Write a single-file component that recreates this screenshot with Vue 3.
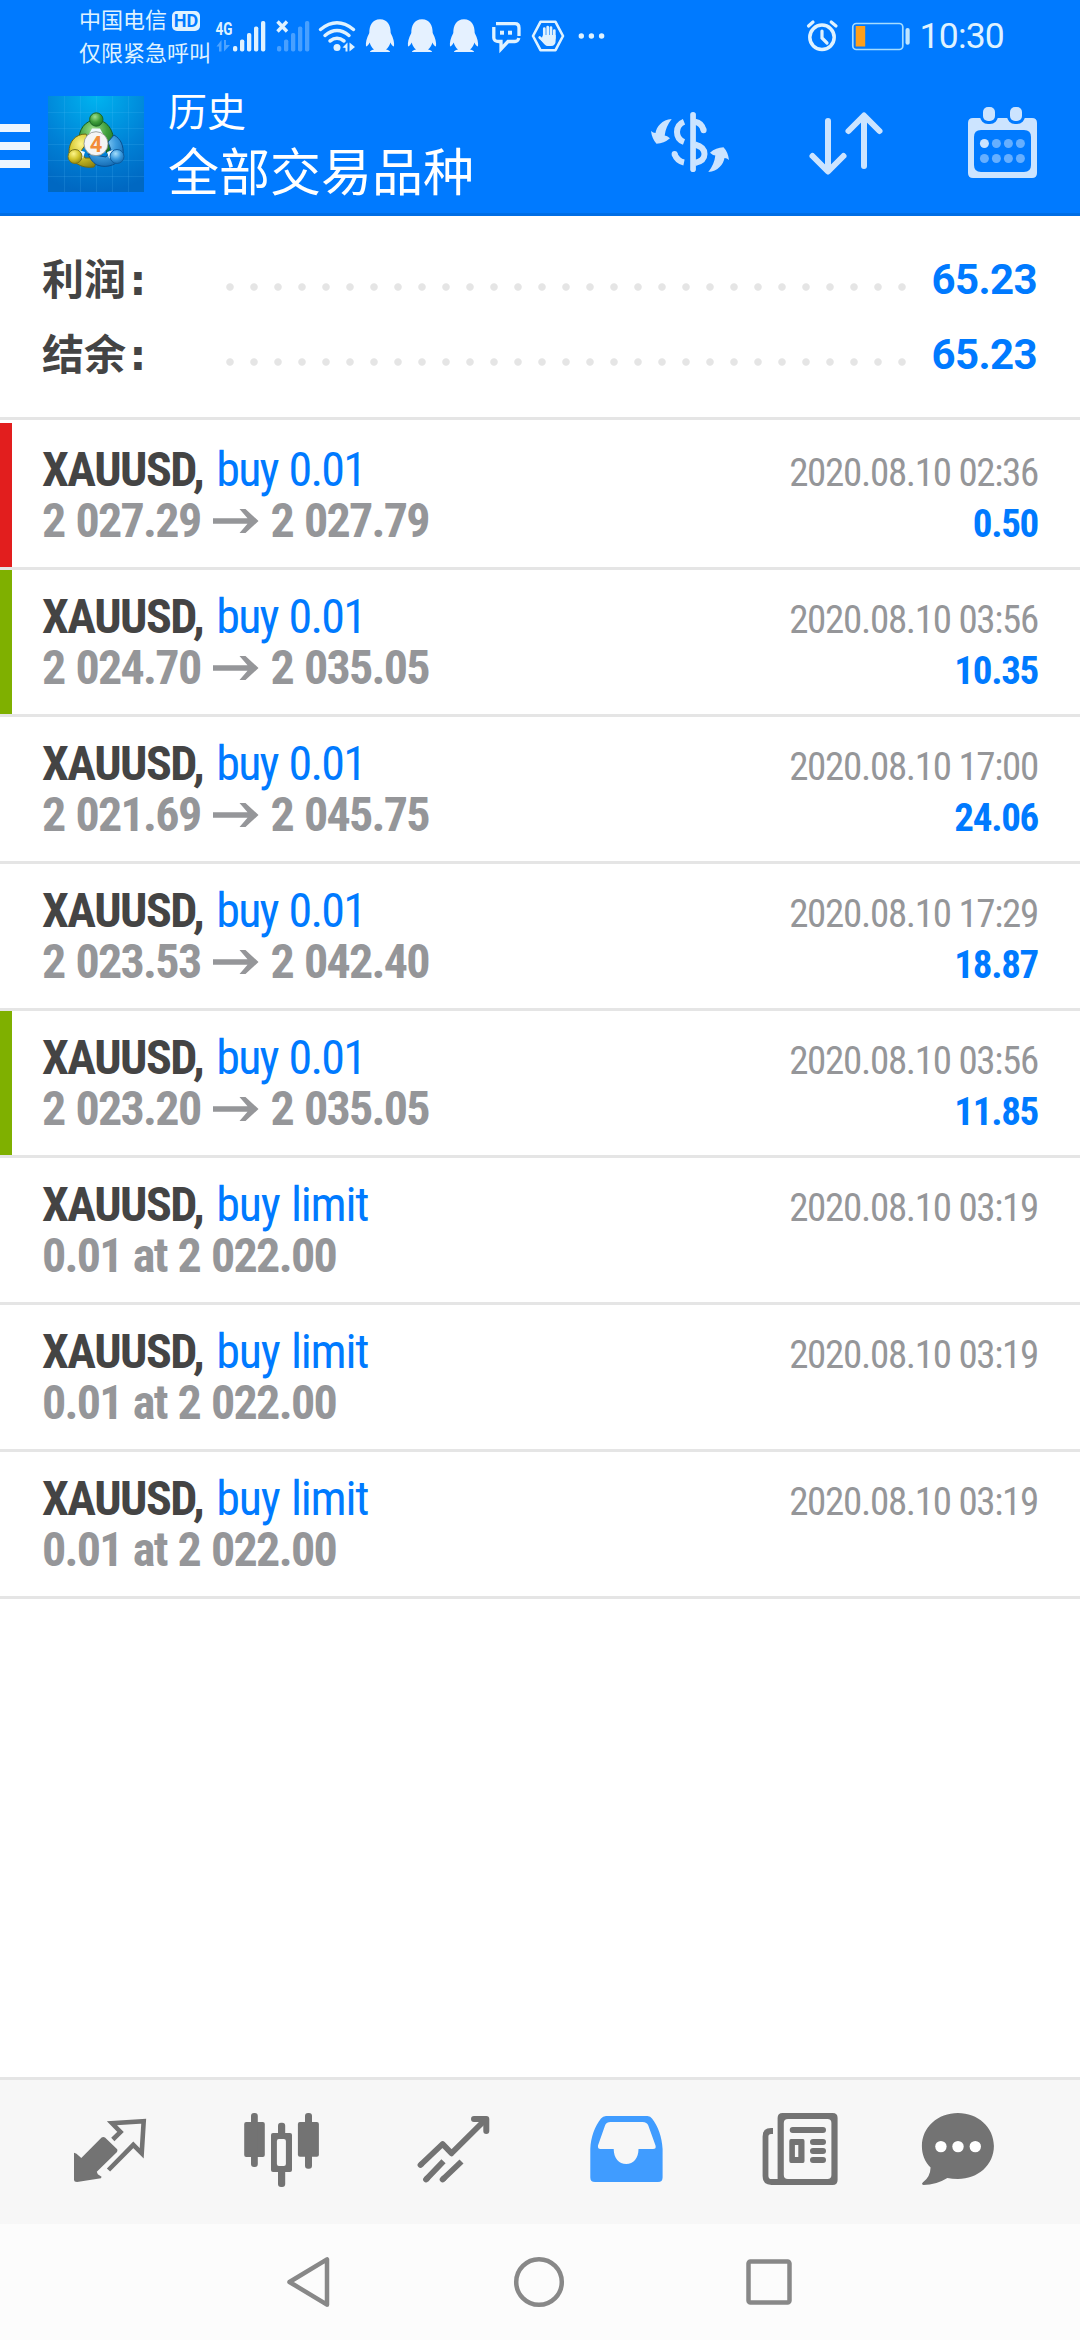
<script setup>
const summary = [
  { label: '利润', value: '65.23' },
  { label: '结余', value: '65.23' },
]

const deals = [
  { side: 'buy 0.01', from: '2 027.29', to: '2 027.79', time: '2020.08.10 02:36', profit: '0.50', mark: 'red' },
  { side: 'buy 0.01', from: '2 024.70', to: '2 035.05', time: '2020.08.10 03:56', profit: '10.35', mark: 'green' },
  { side: 'buy 0.01', from: '2 021.69', to: '2 045.75', time: '2020.08.10 17:00', profit: '24.06' },
  { side: 'buy 0.01', from: '2 023.53', to: '2 042.40', time: '2020.08.10 17:29', profit: '18.87' },
  { side: 'buy 0.01', from: '2 023.20', to: '2 035.05', time: '2020.08.10 03:56', profit: '11.85', mark: 'green' },
  { side: 'buy limit', order: '0.01 at 2 022.00', time: '2020.08.10 03:19' },
  { side: 'buy limit', order: '0.01 at 2 022.00', time: '2020.08.10 03:19' },
  { side: 'buy limit', order: '0.01 at 2 022.00', time: '2020.08.10 03:19' },
]

const bars = [
  { x: 0, h: 5.5 },
  { x: 7, h: 12 },
  { x: 14, h: 18.5 },
  { x: 21, h: 25 },
  { x: 28, h: 30.5 },
]
</script>

<template>
  <div class="screen">
    <header class="top">
      <div class="status">
        <div class="carrier">
          <div class="carrier-line">中国电信<span class="hd">HD</span></div>
          <div class="carrier-line">仅限紧急呼叫</div>
        </div>
        <svg class="status-icons" width="400" height="72" viewBox="210 0 400 72" fill="#dff2ff">
          <text x="215.5" y="35" class="net" textLength="17" lengthAdjust="spacingAndGlyphs">4G</text>
          <g opacity=".35"><path d="M216.5 46.500 221.500 40V51.500H219V46.500ZM224 40H226V45H230L224 51.500Z" /></g>
          <rect v-for="b in bars" :key="b.x" :x="233 + b.x" :y="51.500 - b.h" width="4.300" :height="b.h" rx="1.800" />
          <g opacity=".32">
            <rect v-for="b in bars" :key="b.x" :x="277 + b.x" :y="51.500 - b.h" width="4.300" :height="b.h" rx="1.800" />
          </g>
          <path d="M277.500 21.500 287 31.500M287 21.500 277.500 31.500" stroke="#dff2ff" stroke-width="3.400" fill="none" />
          <g fill="none" stroke="#dff2ff" stroke-width="3.500" stroke-linecap="round">
            <path d="M320.500 29.500Q337 16 353.500 29.500" />
            <path d="M325 35.500Q337 25.500 349 35.500" />
            <path d="M330 41Q337 35.500 344 41" />
          </g>
          <circle cx="337" cy="47.500" r="3.500" />
          <path d="M342.500 47.500 347.500 42.500V51.500H345.500V48ZM349.500 42.500 355 47 349.500 51.500Z" />
          <g v-for="n in 3" :key="n" :transform="`translate(${(n - 1) * 42} 0)`">
            <path fill="#e5f1ff" d="M380 19.300C372 19.300 369.300 26 369.300 33 366.500 38 365.500 43 366 46.500 367.500 46 369 44 369.700 42.500 370.500 45.500 372 48 374 49.500 371 50.300 370 51 370 52H390C390 51 389 50.300 386 49.500 388 48 389.700 45.500 390.300 42.500 391 44 392.500 46 394 46.500 394.500 43 393.500 38 390.700 33 390.700 26 388 19.300 380 19.300Z" />
          </g>
          <g fill="none" stroke="#dff2ff" stroke-width="3.300">
            <path d="M496 23.700H515Q519 23.700 519 28V36" />
            <path d="M493.800 27V38Q494 41.500 499 41.500H501V49L508 41.500H515Q518 41.500 518.800 38" />
          </g>
          <rect x="500" y="30.700" width="4" height="4" /><rect x="508" y="30.700" width="4" height="4" />
          <path d="M533 36 540.500 21.800H555.500L563 36 555.500 50.200H540.500Z" fill="none" stroke="#dff2ff" stroke-width="2.600" stroke-linejoin="round" />
          <g stroke="#dff2ff" stroke-width="2.700" stroke-linecap="round" fill="none">
            <path d="M544.300 28.500V38M547.700 27V38M551 27.500V38M554.300 30.500V38M543.500 41 539.700 37.500" />
          </g>
          <path d="M543 35H555.700V40Q555.700 46 551 46H547.500Q545 46 541 40Z" />
          <circle cx="581.300" cy="36" r="2.700" /><circle cx="591.400" cy="36" r="2.700" /><circle cx="601.600" cy="36" r="2.700" />
        </svg>
        <div class="grow"></div>
        <svg width="110" height="72" viewBox="803 0 110 72" fill="none" stroke="#dff2ff">
          <circle cx="822" cy="37.300" r="12.200" stroke-width="3.500" />
          <path d="M822 31V38L827 43M808.500 26 813 22M831.200 22 836 26" stroke-width="3.200" stroke-linecap="round" />
          <rect x="852.800" y="23.500" width="50" height="26" rx="3.500" stroke-width="1.700" stroke="#a4dcff" />
          <rect x="855.700" y="26" width="9.500" height="20.500" fill="#ff9f1a" stroke="none" />
          <rect x="905.500" y="28" width="4.200" height="16.800" rx="2" fill="#bfe5ff" stroke="none" />
        </svg>
        <div class="clock">10:30</div>
      </div>

      <div class="bar">
        <svg width="30" height="44" fill="#edf6ff"><path d="M0 0H30V8H0ZM0 18H30V26H0ZM0 36H30V44H0Z" /></svg>
        <svg class="logo" width="96" height="96" viewBox="0 0 96 96">
          <defs>
            <radialGradient id="sky" cx=".5" cy="0" r="1"><stop offset="0" stop-color="#00b4f0" /><stop offset=".6" stop-color="#0081d6" /><stop offset="1" stop-color="#0068c2" /></radialGradient>
            <radialGradient id="grn" cx=".4" cy=".3" r=".8"><stop offset="0" stop-color="#9ee08f" /><stop offset=".5" stop-color="#3f9f3c" /><stop offset="1" stop-color="#176b1f" /></radialGradient>
            <radialGradient id="yel" cx=".4" cy=".3" r=".8"><stop offset="0" stop-color="#fdf58a" /><stop offset=".5" stop-color="#d3c52b" /><stop offset="1" stop-color="#857b0c" /></radialGradient>
            <radialGradient id="blu" cx=".4" cy=".3" r=".8"><stop offset="0" stop-color="#a5defc" /><stop offset=".5" stop-color="#3a9ade" /><stop offset="1" stop-color="#0b5fa8" /></radialGradient>
          </defs>
          <rect width="96" height="96" fill="url(#sky)" />
          <path d="M0 16.500H96M0 32.500H96M0 48.500H96M0 64.500H96M0 80.500H96M16.500 0V96M32.500 0V96M48.500 0V96M64.500 0V96M80.500 0V96" stroke="#6cf" stroke-opacity=".15" fill="none" />
          <path d="M31 46C30 34 37 24 48 24S66 34 66 48L59 57 52 38H44L38 43Z" fill="url(#grn)" stroke="#135c22" />
          <path d="M38 38C27 38 21 46 21 56 23 66 33 73 46 71L51 62H37L33 55 41 44Z" fill="url(#yel)" stroke="#6e6a14" />
          <path d="M66 39C73 43 76 50 75 59 71 68 60 73 49 69 44 66 42 62 40 58L58 61 63 54 60 46Z" fill="url(#blu)" stroke="#0a4f8f" />
          <path d="M44 32.500H52L55 38H41ZM31 54 37 56 35 62 33 63ZM65 54 59 56 61 62 63 63Z" fill="#effaff" />
          <circle cx="48.300" cy="23.500" r="6.700" fill="url(#grn)" stroke="#1d6927" />
          <circle cx="27" cy="60.500" r="7" fill="url(#yel)" stroke="#7b761a" />
          <circle cx="69" cy="60.500" r="7" fill="url(#blu)" stroke="#0f5d9f" />
          <circle cx="48" cy="47.700" r="12" fill="#f4f4f4" stroke="#8a8f8a" stroke-width=".8" />
          <text x="48" y="55.500" class="four" text-anchor="middle">4</text>
        </svg>
        <div class="titles">
          <div class="title">历史</div>
          <div class="subtitle">全部交易品种</div>
        </div>
        <div class="grow"></div>
        <svg class="tools" width="400" height="141" viewBox="650 72 400 141" fill="#cce4ff">
          <g>
            <path id="swap" d="M671.700 119C662 119.500 656.500 127 655.500 133Q653 133 651 131 652 139 656.500 143.700 664 143.500 670 138.300 667 135.500 664.700 135.500 665.500 127 671.700 119Z" />
            <use href="#swap" transform="rotate(180 690 145.500)" />
            <rect x="690.200" y="112" width="5.700" height="60" rx="2.800" />
            <g fill="none" stroke="#cce4ff" stroke-width="6">
              <path d="M684 121.700Q677 124.500 677 132T684 142M695 121.700Q702 123 703.500 130M674.500 154Q677 161 684 162.500M695 144.500Q704.500 147 704.500 154T695 163" />
              <path d="M703.600 130.100V130.200M674.600 154V154.100" stroke-linecap="round" />
            </g>
          </g>
          <path d="M828 121V171M812.500 156 828 171.500 843.500 156M864 166V116M848.500 131 864 115.500 879.500 131" fill="none" stroke="#cce4ff" stroke-width="6" stroke-linecap="round" stroke-linejoin="round" />
          <path fill-rule="evenodd" d="M973 118H1032Q1037 118 1037 123V173Q1037 178 1032 178H973Q968 178 968 173V123Q968 118 973 118ZM981 130Q974 130 974 137V165Q974 172 981 172H1024Q1031 172 1031 165V137Q1031 130 1024 130Z" />
          <g stroke="#007aff" stroke-width="6" paint-order="stroke"><rect x="983" y="107" width="12" height="14" rx="5" /><rect x="1010" y="107" width="12" height="14" rx="5" /></g>
          <circle cx="984.400" cy="143.500" r="4.500" />
          <g fill="#66afff">
            <circle v-for="n in 3" :key="n" :cx="984.400 + n * 12" cy="143.500" r="4.500" />
            <circle v-for="n in 4" :key="n" :cx="972.400 + n * 12" cy="158.500" r="4.500" />
          </g>
        </svg>
      </div>
    </header>

    <section class="summary">
      <div v-for="s in summary" :key="s.label" class="sum-row">
        <div class="sum-label">{{ s.label }}<span class="colon">:</span></div>
        <div class="dots"></div>
        <div class="sum-value">{{ s.value }}</div>
      </div>
    </section>

    <main class="list">
      <article v-for="(d, i) in deals" :key="i" class="deal">
        <div class="mark" :class="d.mark"></div>
        <div class="left">
          <div class="line"><b class="sym">XAUUSD,</b><span class="side" :class="{ pending: d.order }">{{ d.side }}</span></div>
          <div v-if="d.from" class="line price">
            <span>{{ d.from }}</span>
            <svg class="arrow" width="46" height="26" viewBox="0 0 46 26" fill="#959699"><path d="M0 10.300H34.500L26.500 1H32.500L45.500 13 32.500 25H26.500L34.500 15.700H0Z" /></svg>
            <span>{{ d.to }}</span>
          </div>
          <div v-else class="line price">{{ d.order }}</div>
        </div>
        <div class="right">
          <div class="line time">{{ d.time }}</div>
          <div v-if="d.profit" class="line profit">{{ d.profit }}</div>
        </div>
      </article>
    </main>

    <nav class="tabs">
      <svg viewBox="0 0 172 144">
        <path d="M50 72.700 52.500 73.700 57.300 78 77.600 57.500Q79.300 56.300 81 57.500L93.200 69.300Q93.800 70.500 93 72L72.800 91.700 73.800 94.300 77.600 96.700 76.900 98.300 53.100 102Q50 102 50 99.500Z" />
        <path d="M88.800 59.500 96.500 52 88 43.300 119.700 41.200 117.700 73.300 109.300 64.800 84.500 90" fill="none" stroke="#737373" stroke-width="4.600" />
      </svg>
      <svg viewBox="0 0 172 144">
        <rect x="48.200" y="42" width="20.600" height="35" rx="2" /><rect x="55" y="33" width="6.800" height="54" rx="3" />
        <rect x="101.900" y="42" width="21" height="34.700" rx="2" /><rect x="109" y="33" width="7" height="55.700" rx="3" />
        <rect x="82" y="42.700" width="7.200" height="64.300" rx="3" /><rect x="75" y="53" width="21" height="39" rx="2" />
        <rect x="80.900" y="59" width="9" height="27" rx="2" fill="#f7f7f7" />
      </svg>
      <svg viewBox="0 0 172 144" fill="none" stroke="#737373" stroke-width="5.800">
        <path d="M53 84.500 74.600 64 83.500 73.300 117 40" stroke-linejoin="round" />
        <path d="M106 39H118.300V51" stroke-width="6" stroke-linecap="round" stroke-linejoin="round" />
        <path d="M58 99.500 75.500 81.200M74.600 99.500 93.500 81.500" />
        <path d="M52.500 85 53 84.500M58 99.500 59 98.500M74.600 99.500 75.600 98.500" stroke-linecap="round" />
      </svg>
      <svg viewBox="0 0 172 144" class="active">
        <path fill-rule="evenodd" d="M50.300 69C50.800 57 55 46 61 38.500Q63 36 66 36H107.500Q110.500 36 112 38.500C118 46 122 57 122.600 69V97.500Q122.600 102 118 102H55Q50.300 102 50.300 97.500ZM70.500 42Q66.500 42 65.200 45L58 65.500Q57.500 69 60.500 69H73.700C73.700 78 79 84 86.200 84S98.500 78 98.500 69H113Q116.500 69 115.500 65.500L108.300 45.500Q107 42 102.500 42Z" />
      </svg>
      <svg viewBox="0 0 172 144">
        <path fill-rule="evenodd" d="M70.600 33H120.600Q125.600 33 125.600 38V100Q125.600 105 120.600 105H65.600V38Q65.600 33 70.600 33ZM76 39Q71.800 39 71.800 43V95Q71.800 99 76 99H115.400Q119.400 99 119.400 95V43Q119.400 39 115.400 39ZM79 59H91Q92.500 59 92.500 61V81Q92.500 83 91 83H79Q77.300 83 77.300 81V61Q77.300 59 79 59ZM82.900 65V77H86.300V65Z" />
        <path d="M61 51H59Q53.500 51 53.500 56.500V96Q53.500 102 59.500 102H70" fill="none" stroke="#737373" stroke-width="5.800" />
        <path d="M80.700 50H111M101 62H111M101 71H111M101 80H111" fill="none" stroke="#737373" stroke-width="6" stroke-linecap="round" />
      </svg>
      <svg viewBox="0 0 172 144">
        <path d="M73.900 33C93.800 33 109.900 47 109.900 66S93.800 99 73.900 99Q68 99 63.400 98Q52 105 39.500 105 36.800 104.500 39 102.300 46.300 97 46.600 87.500C40.500 81.500 37.900 74 37.900 66 37.900 47 54 33 73.900 33Z" />
        <g fill="#fff"><circle cx="56.900" cy="66.600" r="5.700" /><circle cx="74" cy="66.600" r="5.700" /><circle cx="91.300" cy="66.600" r="5.700" /></g>
      </svg>
    </nav>

    <footer class="sysnav">
      <svg width="50" height="56" fill="none" stroke="#888" stroke-width="4.500" stroke-linejoin="round"><path d="M5.500 28 43 5.300V50.700Z" /></svg>
      <svg width="56" height="56" fill="none" stroke="#888" stroke-width="4.500"><circle cx="28" cy="28" r="22.800" /></svg>
      <svg width="50" height="56" fill="none" stroke="#888" stroke-width="4.500"><rect x="4.500" y="7.500" width="41" height="41" rx="2" /></svg>
    </footer>
  </div>
</template>

<style>
body { background: #fff; }
</style>

<style scoped>
.screen {
  width: 1080px;
  height: 2340px;
  display: flex;
  flex-direction: column;
  overflow: hidden;
  background: #fff;
  font-family: Roboto, "Noto Sans CJK SC", sans-serif;
}
svg { display: block; flex: none; }
.grow { flex: 1; }

.top {
  box-sizing: border-box;
  height: 216px;
  background: #007aff;
  border-bottom: 3px solid #006ee5;
  color: #fff;
}
.status { display: flex; height: 72px; padding-left: 79px; padding-right: 76px; color: #dff2ff; }
.carrier { width: 131px; padding-top: 4px; white-space: nowrap; }
.carrier-line { display: flex; align-items: center; height: 33px; line-height: 33px; font-size: 22px; }
.hd {
  width: 28px;
  height: 20px;
  margin-left: 5px;
  border-radius: 5px;
  background: #dff2ff;
  color: #007aff;
  font-size: 18px;
  font-weight: 700;
  line-height: 20px;
  text-align: center;
}
.net { font: 700 19px Roboto, sans-serif; }
.four { font: 700 22px Roboto, sans-serif; fill: #f28c38; }
.clock { width: 91px; font-size: 35.500px; line-height: 73px; text-align: right; letter-spacing: -0.8px; }

.bar { display: flex; height: 141px; }
.bar > svg:first-child { margin-top: 52px; }
.logo { margin: 24px 24px 0 18px; }
.titles { white-space: nowrap; }
.title { height: 64px; padding-top: 19px; box-sizing: border-box; font-size: 39px; line-height: 45px; }
.subtitle { font-size: 51px; line-height: 76px; }
.tools { margin-right: 30px; }

.summary {
  box-sizing: border-box;
  height: 204px;
  padding: 27px 43px 0 42px;
  border-bottom: 3px solid #e5e5e5;
}
.sum-row { display: flex; height: 75px; line-height: 75px; font-size: 42px; font-weight: 700; }
.sum-label { width: 172px; color: #444; }
.colon { margin-left: 3.500px; font-family: "DejaVu Sans", sans-serif; font-size: 42px; line-height: 0; }
.dots {
  width: 696px;
  height: 8px;
  margin-top: 40px;
  background: radial-gradient(circle at 16px 4px, #e5e5e5 3.300px, transparent 4.200px) 0 0 / 24px 8px repeat-x;
}
.sum-value { flex: 1; margin-top: -1px; color: #007aff; text-align: right; letter-spacing: -0.600px; }

.list { flex: 1; padding-top: 3px; }
.deal {
  box-sizing: border-box;
  display: flex;
  height: 147px;
  border-bottom: 3px solid #e5e5e5;
  font-family: "Roboto Condensed", Roboto, sans-serif;
  font-stretch: 75%;
}
.mark { width: 12px; }
.red { background: #e21e1e; }
.green { background: #7fb000; }
.left { flex: 1; padding: 21px 0 0 30px; font-size: 48px; letter-spacing: -1.700px; word-spacing: 1.500px; }
.right { padding: 25px 42px 0 0; font-size: 39px; text-align: right; letter-spacing: -1.300px; }
.line { height: 51px; line-height: 51px; white-space: nowrap; }
.sym { color: #444; letter-spacing: -1.500px; }
.side { margin-left: 13px; color: #007aff; letter-spacing: -1.800px; }
.side.pending { letter-spacing: -1.200px; }
.price { display: flex; align-items: center; gap: 13px; color: #959699; font-weight: 700; }
.arrow { margin-right: -2px; }
.time { color: #959699; }
.profit { color: #007aff; font-weight: 700; }

.tabs {
  box-sizing: border-box;
  display: flex;
  height: 147px;
  padding: 0 24px;
  border-top: 3px solid #e5e5e5;
  background: #f7f7f7;
}
.tabs svg { width: 172px; height: 144px; fill: #737373; }
.tabs svg[fill="none"] { fill: none; }
.tabs svg.active { fill: #409cff; }

.sysnav {
  display: flex;
  align-items: center;
  justify-content: space-between;
  height: 116px;
  padding: 0 286px 0 284px;
  background: #fcfcfc;
}
</style>
